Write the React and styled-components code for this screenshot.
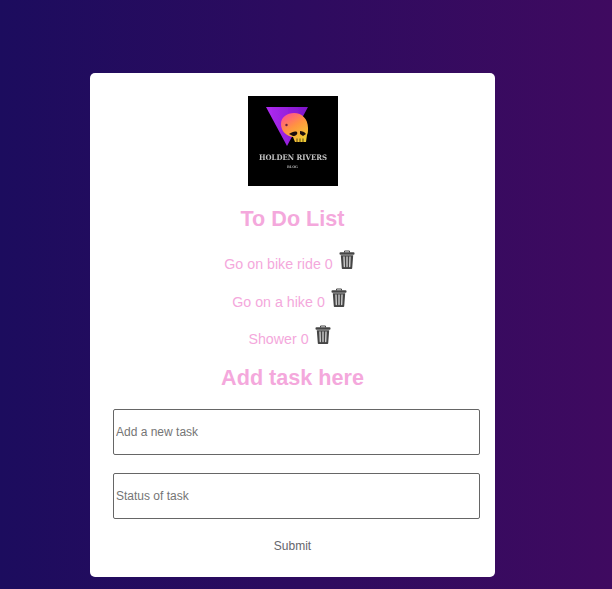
import React from 'react';
import styled, { createGlobalStyle } from 'styled-components';

const GlobalStyle = createGlobalStyle`
	html, body {
		margin: 0;
		padding: 0;
		height: 589px;
		overflow: hidden;
	}
	body {
		background: linear-gradient(to right, #1c0c5e, #3f0a60);
		font-family: "Liberation Sans", Arial, sans-serif;
	}
`;

const Page = styled.div`
	width: 612px;
	height: 589px;
	padding: 73px 117px 0 90px;
	box-sizing: border-box;
`;

const Card = styled.div`
	width: 405px;
	height: 504px;
	box-sizing: border-box;
	padding: 23px 15px 0 23px;
	background: #fff;
	border-radius: 5px;
	display: flex;
	flex-direction: column;
	align-items: center;
`;

const Logo = styled.svg`
	display: block;
	width: 90px;
	height: 90px;
	flex: none;
	margin-left: -8px;
`;

const Title = styled.h1`
	margin: ${props => props.$top}px 0 0 -8px;
	font-size: 21.6px;
	line-height: 28px;
	font-weight: 700;
	color: #f4a8dc;
`;

const TaskList = styled.ul`
	list-style: none;
	margin: 16px 0 0 -8px;
	padding: 0;
	display: flex;
	flex-direction: column;
	align-items: center;
`;

const Task = styled.li`
	height: 37.5px;
	padding-right: 6px;
	display: flex;
	align-items: flex-start;
	gap: 6px;
	font-size: 14.24px;
	line-height: 17px;
	color: #f4a8dc;
`;

const TaskLabel = styled.span`
	margin-top: 7px;
`;

const TrashButton = styled.button`
	border: 0;
	padding: 0;
	margin-top: 1px;
	background: none;
	width: 16px;
	height: 19px;
	color: #454545;
	svg {
		display: block;
	}
`;

const Form = styled.form`
	width: 100%;
	display: flex;
	flex-direction: column;
	align-items: center;
	margin-top: 17px;
`;

const TextInput = styled.input`
	display: block;
	width: 367px;
	height: 46px;
	box-sizing: border-box;
	margin: 0 0 18px;
	padding: 0 2px;
	border: 1px solid #666;
	border-radius: 2px;
	font-family: "Liberation Sans", Arial, sans-serif;
	font-size: 12px;
	align-self: flex-start;
	&::placeholder {
		color: #757575;
		opacity: 1;
	}
`;

const Submit = styled.button`
	border: 0;
	background: none;
	padding: 0;
	margin: 2px 0 0 -8px;
	font-family: "Liberation Sans", Arial, sans-serif;
	font-size: 12px;
	line-height: 14px;
	color: #66666c;
`;

const TrashIcon = () => (
	<svg width="16" height="19" viewBox="0 0 16 19" fill="none">
		<path d="M5.500 2.500V1h5v1.500" stroke="currentColor" strokeWidth="1" />
		<rect x="0.500" y="2.300" width="15" height="2.400" rx="1" fill="currentColor" />
		<path d="M1.800 5.200h12.400L13.200 18.200a.8.8 0 0 1-.8.8H3.600a.8.8 0 0 1-.8-.8z" fill="currentColor" />
		<path d="M5 7l.3 9.500M8 7v9.500M11 7l-.3 9.500" stroke="#d8d8d8" strokeWidth="1.300" strokeLinecap="round" />
	</svg>
);

const BrandLogo = () => (
	<Logo viewBox="0 0 90 90">
		<defs>
			<linearGradient id="tri" x1="0" y1="0" x2="1" y2="0">
				<stop offset="0" stopColor="#b02cf2" />
				<stop offset="1" stopColor="#7d14c8" />
			</linearGradient>
			<linearGradient id="skull" x1="0.100" y1="0" x2="0.700" y2="1">
				<stop offset="0" stopColor="#ff4a9a" />
				<stop offset="0.5" stopColor="#ff9440" />
				<stop offset="1" stopColor="#f0cc34" />
			</linearGradient>
			<filter id="soft">
				<feGaussianBlur stdDeviation="0.500" />
			</filter>
		</defs>
		<rect width="90" height="90" fill="#000" />
		<g filter="url(#soft)">
			<path d="M18 11H60L39 50z" fill="url(#tri)" />
			<path d="M33 28c0-7 6-11 13-11 8 0 14 6 14 15 0 3 0 5-1 7l-1 7h-11l-2-5c-7-1-12-6-12-13z" fill="url(#skull)" />
			<path d="M41 38c3-2 6-3 8-2 1 2-1 4-4 4z" fill="#1c1008" />
			<path d="M52 35c2 0 5 1 6 3l-3 2-3-2z" fill="#1c1008" />
			<circle cx="38.500" cy="29" r="1.200" fill="#6a2040" />
			<path d="M49 42.500v4M52 42.500v4M55 42.500v4" stroke="#1c1008" strokeWidth="0.700" />
			<text x="11" y="63.500" textLength="68" lengthAdjust="spacingAndGlyphs" fontFamily="DejaVu Serif, serif" fontWeight="700" fontSize="7.500" fill="#c4c4c4">HOLDEN RIVERS</text>
			<text x="39" y="71.500" textLength="11" lengthAdjust="spacingAndGlyphs" fontFamily="DejaVu Serif, serif" fontWeight="700" fontSize="3.400" fill="#a8a8a8">BLOG</text>
		</g>
	</Logo>
);

const tasks = [
	{ name: 'Go on bike ride', status: 0 },
	{ name: 'Go on a hike', status: 0 },
	{ name: 'Shower', status: 0 },
];

const App = () => (
	<Page>
		<GlobalStyle />
		<Card>
			<BrandLogo />
			<Title $top={19}>To Do List</Title>
			<TaskList>
				{ tasks.map( task => (
					<Task key={ task.name }>
						<TaskLabel>{ task.name } { task.status }</TaskLabel>
						<TrashButton type="button" aria-label="Delete"><TrashIcon /></TrashButton>
					</Task>
				) ) }
			</TaskList>
			<Title $top={2}>Add task here</Title>
			<Form onSubmit={ e => e.preventDefault() }>
				<TextInput type="text" placeholder="Add a new task" />
				<TextInput type="text" placeholder="Status of task" />
				<Submit type="submit">Submit</Submit>
			</Form>
		</Card>
	</Page>
);

export default App;
